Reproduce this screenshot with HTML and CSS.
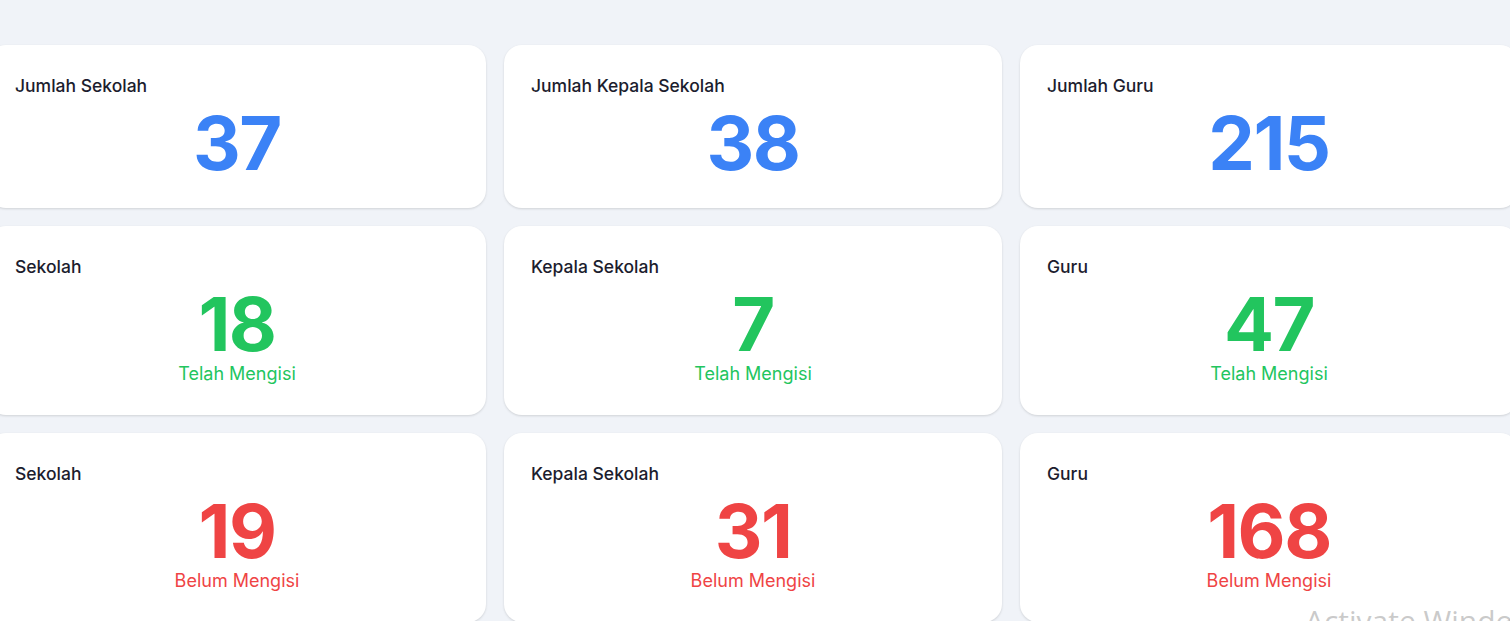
FILE: index.html
```html
<!DOCTYPE html>
<html lang="id">
<head>
<meta charset="utf-8">
<title>Dashboard</title>
<link rel="stylesheet" href="styles.css">
</head>
<body>
<main class="stats">
  <div class="card card-total">
    <div class="label">Jumlah Sekolah</div>
    <div class="value blue">37</div>
  </div>
  <div class="card card-total">
    <div class="label">Jumlah Kepala Sekolah</div>
    <div class="value blue">38</div>
  </div>
  <div class="card card-total">
    <div class="label">Jumlah Guru</div>
    <div class="value blue">215</div>
  </div>

  <div class="card">
    <div class="label">Sekolah</div>
    <div class="value green">18</div>
    <div class="status green">Telah Mengisi</div>
  </div>
  <div class="card">
    <div class="label">Kepala Sekolah</div>
    <div class="value green">7</div>
    <div class="status green">Telah Mengisi</div>
  </div>
  <div class="card">
    <div class="label">Guru</div>
    <div class="value green">47</div>
    <div class="status green">Telah Mengisi</div>
  </div>

  <div class="card">
    <div class="label">Sekolah</div>
    <div class="value red">19</div>
    <div class="status red">Belum Mengisi</div>
  </div>
  <div class="card">
    <div class="label">Kepala Sekolah</div>
    <div class="value red">31</div>
    <div class="status red">Belum Mengisi</div>
  </div>
  <div class="card">
    <div class="label">Guru</div>
    <div class="value red">168</div>
    <div class="status red">Belum Mengisi</div>
  </div>
</main>
<div class="watermark">Activate Windows</div>
</body>
</html>
```
FILE: styles.css
```css
html, body {
  margin: 0;
  padding: 0;
}
body {
  background: #f0f3f8;
  font-family: Inter, "Noto Sans", sans-serif;
  width: 1510px;
  height: 621px;
  overflow: hidden;
  position: relative;
}
.stats {
  display: grid;
  grid-template-columns: repeat(3, 498px);
  column-gap: 18px;
  row-gap: 18px;
  margin: 45px 0 0 -12px;
}
.card {
  background: #ffffff;
  border-radius: 18px;
  box-shadow: 0 1px 3px rgba(0, 0, 0, 0.09), 0 1px 2px rgba(0, 0, 0, 0.05);
  padding: 27px 27px 28px;
  display: flex;
  flex-direction: column;
  align-items: stretch;
}
.label {
  font-size: 17.5px;
  line-height: 28px;
  font-weight: 500;
  color: #1c1d2e;
  letter-spacing: 0;
}
.value {
  text-align: center;
  font-size: 74px;
  line-height: 74px;
  font-weight: 700;
  letter-spacing: -1.5px;
  margin-top: 6px;
}
.status {
  text-align: center;
  font-size: 18px;
  line-height: 26px;
  font-weight: 400;
  margin-top: 0;
}
.blue { color: #3b82f6; }
.green { color: #22c55e; }
.red { color: #ef4444; }
.watermark {
  position: absolute;
  left: 1305px;
  top: 600px;
  font-family: "Open Sans", sans-serif;
  font-size: 30px;
  color: rgba(150, 150, 150, 0.5);
  white-space: nowrap;
}
```
